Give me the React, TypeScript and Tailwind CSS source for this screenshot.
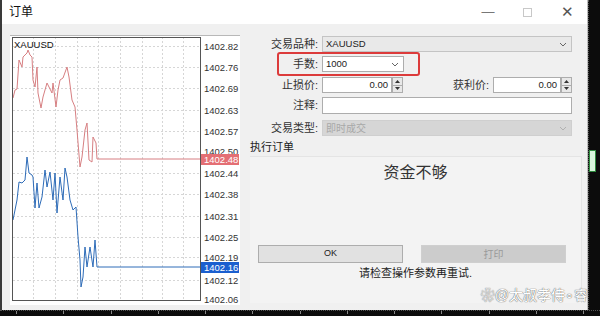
import React from "react";

const font = "font-['Liberation_Sans','Noto_Sans_CJK_SC',sans-serif]";

const axis = [
  ["1402.82", 46],
  ["1402.76", 67],
  ["1402.69", 88],
  ["1402.63", 110],
  ["1402.57", 131],
  ["1402.50", 151],
  ["1402.44", 173],
  ["1402.38", 194],
  ["1402.31", 216],
  ["1402.25", 237],
  ["1402.19", 257],
  ["1402.12", 280],
  ["1402.06", 299],
] as const;

const gridX = [33, 55, 77, 98, 120, 142, 162, 183];

const askLine =
  "13,98 15,90 17,89 19,60 22,67 23,57 27,53 28,50 30,55 32,57 33,80 35,87 37,67 38,93 41,108 43,97 47,83 49,87 52,93 53,83 56,107 58,90 60,80 63,78 67,67 69,77 72,100 75,107 77,130 80,167 82,157 85,130 87,123 89,160 92,162 93,137 96,143 97,159 200,159";

const bidLine =
  "13,220 17,200 19,182 22,183 25,180 27,157 29,173 32,175 33,177 35,208 37,183 39,208 42,197 45,170 47,187 50,172 53,200 55,173 57,213 60,177 63,200 65,168 67,177 70,200 73,210 76,207 78,237 80,260 81,287 83,277 85,247 87,267 90,247 93,267 95,240 97,267 200,267";

function Chart() {
  return (
    <svg
      width={230}
      height={270}
      viewBox="10 35 230 270"
      className="block"
      fontFamily="'Liberation Sans', sans-serif"
    >
      <rect x={10} y={35} width={230} height={270} fill="#ffffff" />
      <line x1={10} y1={35.5} x2={240} y2={35.5} stroke="#b8b8b8" />
      {gridX.map((x) => (
        <line key={x} x1={x + 0.5} y1={37} x2={x + 0.5} y2={300} stroke="#d6d6d6" strokeDasharray="2 2" />
      ))}
      {axis.slice(0, 12).map(([, y]) => (
        <line key={y} x1={13} y1={y + 0.5} x2={200} y2={y + 0.5} stroke="#d6d6d6" strokeDasharray="2 2" />
      ))}
      <polyline points={askLine} fill="none" stroke="#d77f82" strokeWidth={1} />
      <polyline points={bidLine} fill="none" stroke="#2e6cb8" strokeWidth={1} />
      <rect x={12.5} y={37.5} width={188} height={263} fill="none" stroke="#555" />
      <text x={14} y={48} fontSize={9.5} fill="#111">XAUUSD</text>
      {axis.map(([t, y]) => (
        <text key={t} x={204} y={y + 3.5} fontSize={9.5} fill="#333">
          {t}
        </text>
      ))}
      <rect x={201} y={154} width={38} height={11} fill="#e46f74" />
      <text x={204} y={163} fontSize={9.5} fill="#fff">1402.48</text>
      <rect x={201} y={262} width={38} height={11} fill="#1b5fcf" />
      <text x={204} y={271} fontSize={9.5} fill="#fff">1402.16</text>
    </svg>
  );
}

function Chevron({ color = "#666" }: { color?: string }) {
  return (
    <svg width="8" height="5" viewBox="0 0 8 5">
      <path d="M1 1l3 3 3-3" fill="none" stroke={color} strokeWidth="1" />
    </svg>
  );
}

function Spin() {
  return (
    <div className="flex h-[16px] w-[11px] flex-col border border-[#adadad] bg-[#e8e8e8]">
      <div className="flex flex-1 items-center justify-center">
        <svg width="5" height="3" viewBox="0 0 5 3"><path d="M0 3h5L2.5 0z" fill="#333" /></svg>
      </div>
      <div className="h-px bg-[#adadad]" />
      <div className="flex flex-1 items-center justify-center">
        <svg width="5" height="3" viewBox="0 0 5 3"><path d="M0 0h5L2.5 3z" fill="#333" /></svg>
      </div>
    </div>
  );
}

function Label({ children }: { children: React.ReactNode }) {
  return <div className="w-[68px] shrink-0 text-right text-[11px] leading-none text-[#333]">{children}</div>;
}

function OrderForm() {
  return (
    <div className="relative flex w-[332px] flex-col pt-[12px]">
      <div className="flex h-[16px] items-center gap-[4px]">
        <Label>交易品种:</Label>
        <div className="flex h-full w-[250px] items-center justify-between border border-[#c4c4c4] bg-[#e9e9e9] pl-[3px] pr-[4px] text-[9.5px] text-[#222]">
          XAUUSD
          <Chevron />
        </div>
      </div>
      <div className="mt-[4px] flex h-[16px] items-center gap-[4px]">
        <Label>手数:</Label>
        <div className="flex h-full w-[82px] items-center justify-between border border-[#adadad] bg-white pl-[3px] pr-[4px] text-[9.5px] text-[#222]">
          1000
          <Chevron />
        </div>
      </div>
      <div className="mt-[5px] flex h-[16px] items-center">
        <Label>止损价:</Label>
        <div className="ml-[4px] flex h-full w-[70px] items-center justify-end border border-[#adadad] bg-white pr-[3px] text-[9.5px] text-[#222]">
          0.00
        </div>
        <Spin />
        <div className="ml-auto w-[86px] text-right text-[11px] leading-none text-[#333]">获利价:</div>
        <div className="ml-[4px] flex h-full w-[68px] items-center justify-end border border-[#adadad] bg-white pr-[3px] text-[9.5px] text-[#222]">
          0.00
        </div>
        <Spin />
        <div className="w-[10px]" />
      </div>
      <div className="mt-[4px] flex h-[17px] items-center gap-[4px]">
        <Label>注释:</Label>
        <div className="h-full w-[250px] border border-[#adadad] bg-white" />
      </div>
      <div className="mt-[6px] flex h-[16px] items-center gap-[4px]">
        <Label>交易类型:</Label>
        <div className="flex h-full w-[250px] items-center justify-between border border-[#cfcfcf] bg-[#d6d6d6] pl-[3px] pr-[4px] text-[10px] text-[#a8a8a8]">
          即时成交
          <Chevron color="#b0b0b0" />
        </div>
      </div>
      <div className="mt-[6px] text-[11px] leading-none text-[#222]">执行订单</div>
      <div className="mt-[3px] flex h-[147px] flex-col items-center border-r border-t border-[#e4e4e4] bg-[#f3f3f3]">
        <div className="mt-[8px] text-[16px] leading-none text-[#333]">资金不够</div>
        <div className="mt-[64px] flex w-full gap-[18px] px-[8px]">
          <div className="flex h-[18px] w-[145px] items-center justify-center border border-[#adadad] bg-[#e1e1e1] text-[9px] text-[#222]">
            OK
          </div>
          <div className="flex h-[18px] w-[145px] items-center justify-center border border-[#cfcfcf] bg-[#cccccc] text-[10px] text-[#9a9a9a]">
            打印
          </div>
        </div>
        <div className="mt-[5px] text-[11px] leading-none text-[#222]">请检查操作参数再重试.</div>
      </div>
      <div className="absolute left-[27px] top-[28px] h-[24px] w-[143px] rounded-[3px] border-2 border-[#dc3b3b]" />
      <div className="absolute right-[-6px] top-[264px] text-[14px] leading-none text-white [text-shadow:0_0_1px_#666,0_0_1px_#666]">
        ❀@太叔孝侍∘睿
      </div>
    </div>
  );
}

export default function App() {
  return (
    <div className={`flex h-[316px] w-[600px] flex-col overflow-hidden bg-[#0c0c0c] ${font}`}>
      <div className="flex h-[310px]">
        <div className="flex w-[588px] flex-col border-l-2 border-r border-[#bdbdbd] border-l-[#3a3a3a] bg-[#f0f0f0]">
          <div className="flex h-[24px] items-center bg-white pl-[7px] text-[12px] text-[#111]">
            <span>订单</span>
            <div className="ml-auto flex items-center">
              <span className="w-[38px] text-center text-[13px] text-[#777]">—</span>
              <span className="flex w-[40px] justify-center">
                <span className="h-[9px] w-[9px] border border-[#c8c8c8]" />
              </span>
              <span className="w-[40px] text-center text-[15px] font-light text-[#555]">✕</span>
            </div>
          </div>
          <div className="flex gap-[10px] pl-[8px]">
            <div className="mt-[11px]">
              <Chart />
            </div>
            <OrderForm />
          </div>
        </div>
        <div className="relative flex-1 border-l border-dotted border-[#555]">
          <div className="mt-[150px] h-[22px] w-[7px] border border-[#2e8b3e] bg-[#d8f6dc]" />
        </div>
      </div>
      <div className="flex h-[6px] justify-between border-t border-dotted border-[#555] px-[16px]">
        {Array.from({ length: 13 }).map((_, i) => (
          <div key={i} className="h-[3px] w-px bg-[#888]" />
        ))}
      </div>
    </div>
  );
}
